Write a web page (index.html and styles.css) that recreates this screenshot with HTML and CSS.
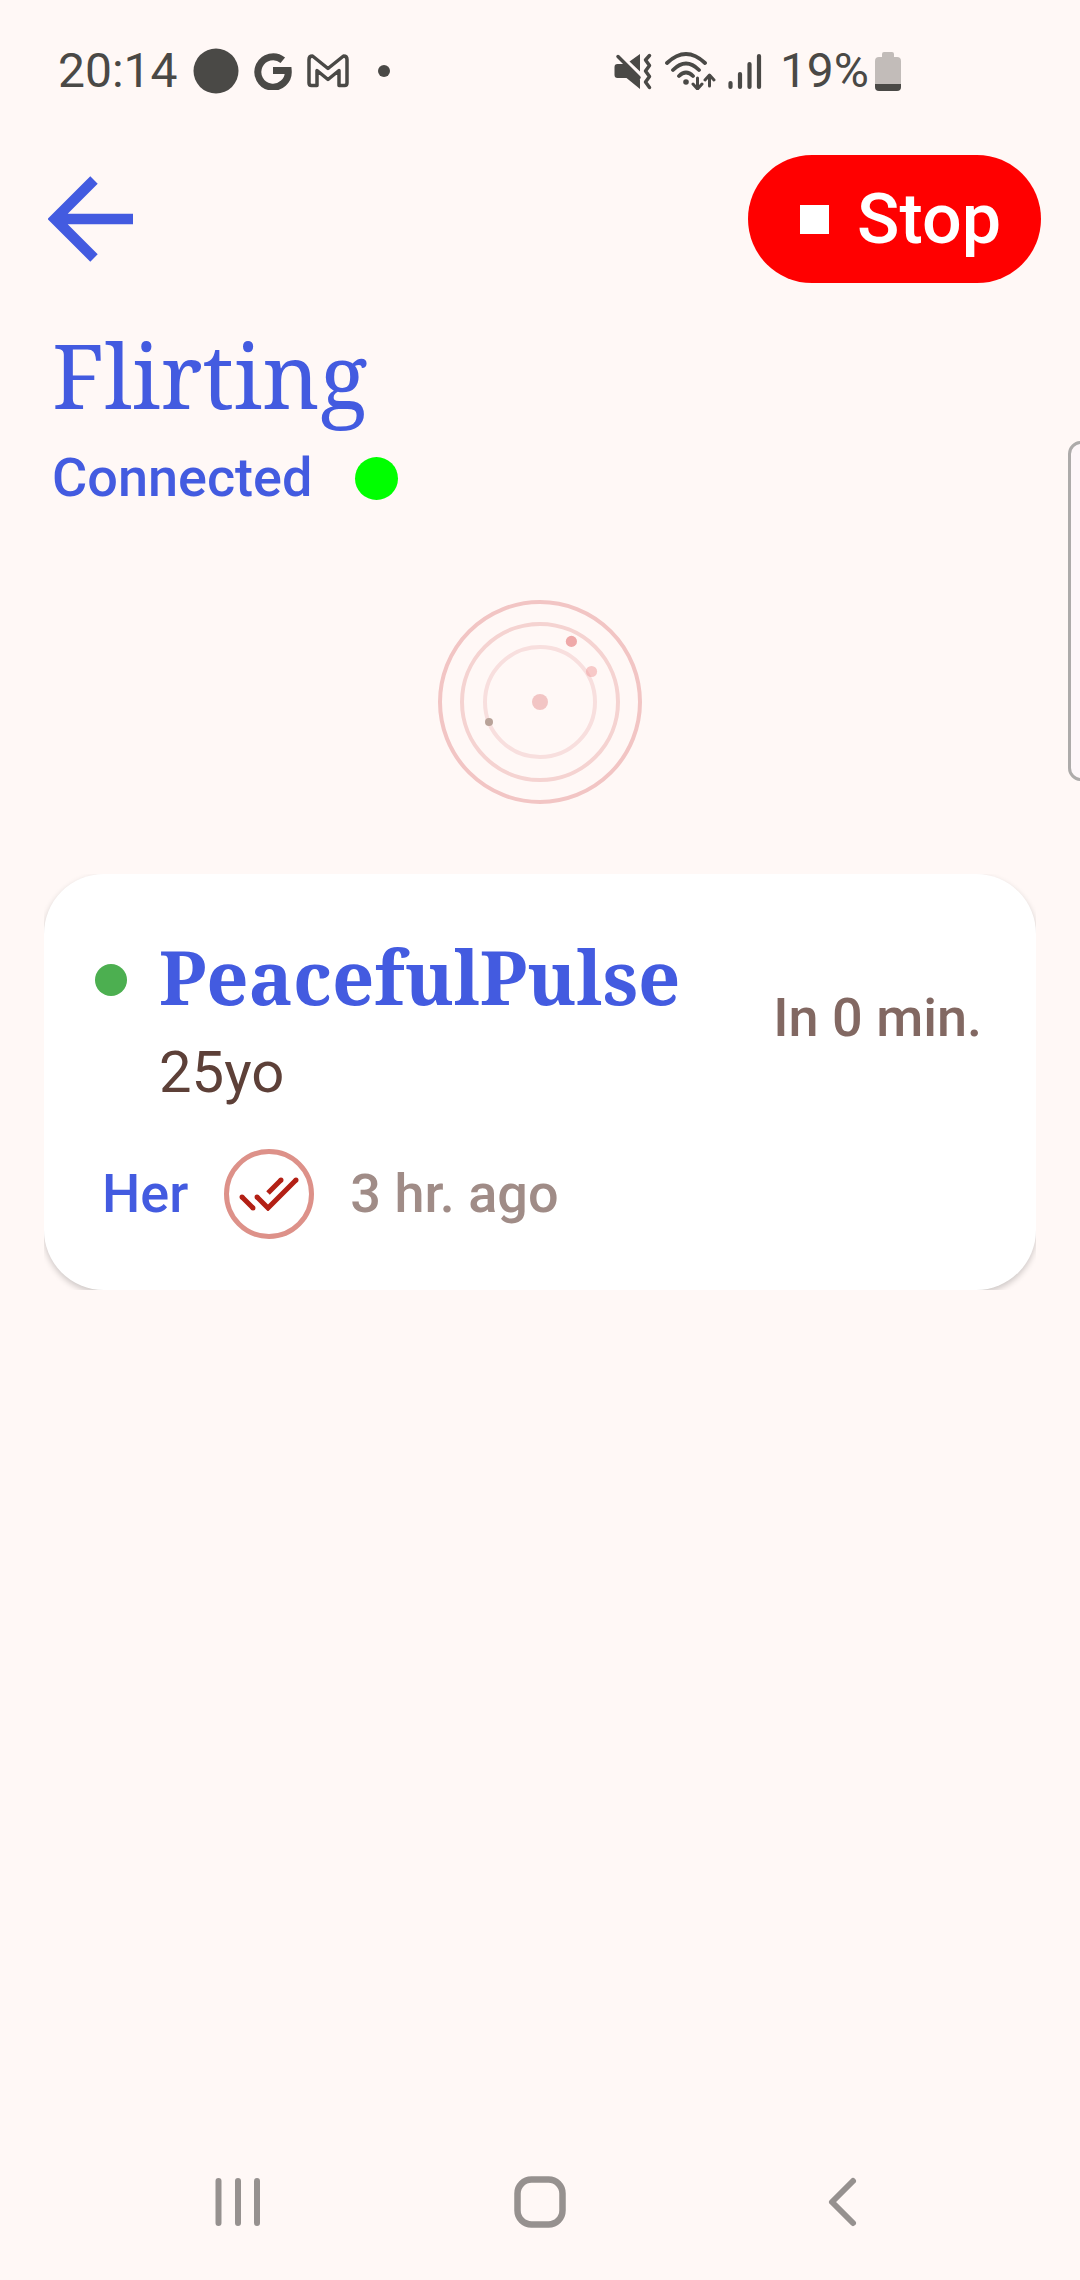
FILE: index.html
```html
<!DOCTYPE html>
<html lang="en">
<head>
    <meta charset="UTF-8">
    <meta name="viewport" content="width=device-width, initial-scale=1">
    <title>Flirting</title>
    <link rel="stylesheet" href="styles.css">
</head>
<body>
    <div class="screen">
        <div class="status-bar">
            <div class="status-left">
                <span class="status-text">20:14</span>
                <svg width="46" height="46" viewBox="0 0 46 46"><circle cx="23" cy="23" r="22.5" fill="currentColor"/></svg>
                <svg width="38" height="38" viewBox="0 0 38 38"><path d="M28.8 8.3A15.2 15.2 0 1 0 34.2 18.6H19" fill="none" stroke="currentColor" stroke-width="7"/></svg>
                <svg width="42" height="34" viewBox="0 0 42 34"><path d="M2 29V5.500Q2 2 5.500 2L21 14.500L36.500 2Q40 2 40 5.500V29Q40 31.500 37.500 31.500H32V16.500L21 25.500L10 16.500V31.500H4.500Q2 31.500 2 29Z" fill="none" stroke="currentColor" stroke-width="3.500" stroke-linejoin="round"/></svg>
                <svg class="status-more" width="12" height="12" viewBox="0 0 12 12"><circle cx="6" cy="6" r="6" fill="currentColor"/></svg>
            </div>
            <div class="status-right">
                <svg width="38" height="38" viewBox="0 0 38 38">
                    <path d="M0.500 15Q0.500 12 3.500 12H10L26 27.500V37L12.500 26H3.500Q0.500 26 0.500 23ZM15.500 9.500L26 2V19.500Z" fill="currentColor"/>
                    <path d="M4 4.500L25 25.500" stroke="currentColor" stroke-width="3.500" stroke-linecap="round"/>
                    <path d="M35.500 3.500L31.500 8L35.500 13.500L31.500 19L35.500 24.500L31.500 30L35.500 35.500" fill="none" stroke="currentColor" stroke-width="3.500" stroke-linejoin="round" stroke-linecap="round"/>
                </svg>
                <svg width="52" height="38" viewBox="0 0 52 38">
                    <path d="M3 11Q22 -7 41 11M9 18Q22 5 35 18M15 24Q22 17 29 24" fill="none" stroke="currentColor" stroke-width="3.800" stroke-linecap="round"/>
                    <circle cx="22" cy="30" r="2.800" fill="currentColor"/>
                    <path d="M33.500 26V36M29 32L33.500 37L38 32M45.500 34V23.500M41 28L45.500 23L50 28" fill="none" stroke="currentColor" stroke-width="3" stroke-linecap="round" stroke-linejoin="round"/>
                </svg>
                <svg width="34" height="38" viewBox="0 0 34 38"><path d="M2.500 31V35M12 22V35M21.500 12V35M31 4V35" stroke="currentColor" stroke-width="4.200" stroke-linecap="round"/></svg>
                <span class="status-text battery-text">19%</span>
                <svg width="26" height="39" viewBox="0 0 26 39">
                    <path d="M7 5V2Q7 0 9 0H17Q19 0 19 2V5H22Q26 5 26 9V32H0V9Q0 5 4 5Z" fill="#c2bcb9"/>
                    <path d="M0 32H26V35Q26 39 22 39H4Q0 39 0 35Z" fill="currentColor"/>
                </svg>
            </div>
        </div>

        <header class="app-bar">
            <button class="back-btn" type="button" aria-label="Back">
                <svg width="86" height="86" viewBox="0 0 86 86"><path d="M46 4L7 43L46 82M8 43H85" fill="none" stroke="currentColor" stroke-width="10.500"/></svg>
            </button>
            <button class="stop-btn" type="button">
                <span class="stop-icon"></span>
                Stop
            </button>
        </header>

        <main class="content">
            <h1 class="title">Flirting</h1>
            <div class="connection">
                <span>Connected</span>
                <span class="connection-dot"></span>
            </div>

            <svg class="radar" width="204" height="204" viewBox="0 0 204 204">
                <g fill="none" stroke-width="4">
                    <circle cx="102" cy="102" r="100" stroke="#f2c5c4"/>
                    <circle cx="102" cy="102" r="78" stroke="#f5d3d1"/>
                    <circle cx="102" cy="102" r="55" stroke="#f8dfde"/>
                </g>
                <circle cx="102" cy="102" r="8" fill="#f2c5c4"/>
                <circle cx="133.400" cy="41.400" r="5.600" fill="#efa9a9"/>
                <circle cx="153.500" cy="71.500" r="5.600" fill="#ef9a9a" fill-opacity="0.5"/>
                <circle cx="51" cy="122" r="4" fill="#b9a399"/>
            </svg>

            <ul class="people">
                <li class="person">
                    <div class="card">
                        <div class="card-top">
                            <span class="online-dot"></span>
                            <div class="person-info">
                                <h2 class="person-name">PeacefulPulse</h2>
                                <p class="person-age">25yo</p>
                            </div>
                            <span class="eta">In 0 min.</span>
                        </div>
                        <div class="card-bottom">
                            <span class="who">Her</span>
                            <span class="read-badge">
                                <svg width="60" height="34" viewBox="0 0 60 34"><path d="M3 20L14 31M18 20L29 31L57 3M29 16L42 3" fill="none" stroke="#b32015" stroke-width="5"/><g fill="#b32015"><circle cx="3" cy="20" r="2.500"/><circle cx="14" cy="31" r="2.500"/><circle cx="18" cy="20" r="2.500"/><circle cx="57" cy="3" r="2.500"/><circle cx="42" cy="3" r="2.500"/></g></svg>
                            </span>
                            <span class="ago">3 hr. ago</span>
                        </div>
                    </div>
                </li>
            </ul>
        </main>

        <nav class="nav-bar">
            <button type="button" aria-label="Recent apps">
                <svg width="48" height="52" viewBox="0 0 48 52"><path d="M4.500 5V47M24 5V47M43 5V47" stroke="currentColor" stroke-width="6" stroke-linecap="round"/></svg>
            </button>
            <button type="button" aria-label="Home">
                <svg width="52" height="52" viewBox="0 0 52 52"><rect x="3.500" y="3.500" width="45" height="45" rx="14" fill="none" stroke="currentColor" stroke-width="6.500"/></svg>
            </button>
            <button type="button" aria-label="Go back">
                <svg width="32" height="52" viewBox="0 0 32 52"><path d="M27 5L6 26L27 47" fill="none" stroke="currentColor" stroke-width="6" stroke-linecap="round" stroke-linejoin="round"/></svg>
            </button>
        </nav>

        <div class="edge-handle"></div>
    </div>
</body>
</html>
```
FILE: styles.css
```css
:root {
    --bg-color: #fff8f6;
    --primary: #435be0;
    --status-color: #4a4946;
    --serif: "Noto Serif", "Droid Serif", "Noto Serif CJK SC", "DejaVu Serif", serif;
}

* {
    box-sizing: border-box;
}

body {
    margin: 0;
    background-color: var(--bg-color);
    font-family: Roboto, sans-serif;
}

h1, h2, p, ul {
    margin: 0;
    padding: 0;
}

svg {
    display: block;
    flex-shrink: 0;
}

button {
    border: none;
    padding: 0;
    background: none;
    font-family: inherit;
    cursor: pointer;
}

.screen {
    position: relative;
    min-height: 100vh;
    display: flex;
    flex-direction: column;
    overflow: hidden;
}

/* system status bar */
.status-bar {
    height: 142px;
    padding: 0 179px 0 58px;
    display: flex;
    align-items: center;
    justify-content: space-between;
    color: var(--status-color);
}

.status-left {
    display: flex;
    align-items: center;
    gap: 15px;
}

.status-right {
    display: flex;
    align-items: center;
    gap: 12px;
}

.status-text {
    font-size: 48px;
    line-height: 56px;
}

.status-more {
    margin-left: 14px;
}

.battery-text {
    margin: 0 -6px 0 6px;
}

/* app bar */
.app-bar {
    padding: 13px 39px 0 48px;
    display: flex;
    align-items: center;
    justify-content: space-between;
}

.back-btn {
    color: var(--primary);
}

.stop-btn {
    height: 128px;
    padding: 0 40px 0 52px;
    display: flex;
    align-items: center;
    gap: 28px;
    border-radius: 64px;
    background-color: #ff0000;
    color: #fff;
    font-size: 70px;
    font-weight: 500;
    line-height: 80px;
}

.stop-icon {
    width: 29px;
    height: 29px;
    background-color: #fff;
}

/* content */
.content {
    flex: 1;
    padding: 32px 44px 0;
}

.title {
    margin-bottom: 4px;
    padding-left: 8px;
    color: var(--primary);
    font-family: var(--serif);
    font-size: 89px;
    font-weight: 400;
    line-height: 120px;
}

.connection {
    padding-left: 8px;
    display: flex;
    align-items: center;
    gap: 43px;
    color: var(--primary);
    font-size: 54px;
    font-weight: 500;
    line-height: 78px;
}

.connection-dot {
    width: 43px;
    height: 43px;
    border-radius: 50%;
    background-color: #00ff00;
}

.radar {
    margin: 83px auto 70px;
}

.people {
    list-style: none;
}

.person {
    overflow: hidden;
}

.card {
    padding: 61px 54px 51px 51px;
    border-radius: 60px;
    background-color: #fff;
    box-shadow: 0 3px 6px rgba(0, 0, 0, 0.2);
}

.card-top {
    display: flex;
    align-items: flex-start;
}

.online-dot {
    width: 32px;
    height: 32px;
    margin: 29px 32px 0 0;
    border-radius: 50%;
    background-color: #4caf50;
}

.person-info {
    flex: 1;
}

.person-name {
    color: var(--primary);
    font-family: var(--serif);
    font-size: 74px;
    font-weight: 700;
    line-height: 84px;
}

.person-age {
    color: #5d4038;
    font-size: 58px;
    line-height: 106px;
}

.eta {
    margin-top: 53px;
    color: #826862;
    font-size: 54px;
    font-weight: 500;
    line-height: 60px;
}

.card-bottom {
    margin-top: 24px;
    padding-left: 7px;
    display: flex;
    align-items: center;
    gap: 36px;
    font-size: 54px;
    font-weight: 500;
    line-height: 90px;
}

.who {
    color: var(--primary);
}

.read-badge {
    width: 90px;
    height: 90px;
    display: flex;
    align-items: center;
    justify-content: center;
    border: 5px solid #dd9189;
    border-radius: 50%;
}

.ago {
    color: #a08c87;
}

/* system navigation */
.nav-bar {
    padding: 0 8% 52px;
    display: grid;
    grid-template-columns: repeat(3, 1fr);
    justify-items: center;
    color: #96918f;
}

.nav-bar button {
    color: inherit;
}

.edge-handle {
    position: absolute;
    top: 441px;
    right: -14px;
    width: 26px;
    height: 340px;
    border: 3px solid #adabaa;
    border-radius: 14px;
    background-color: #fdf7f9;
}
```
